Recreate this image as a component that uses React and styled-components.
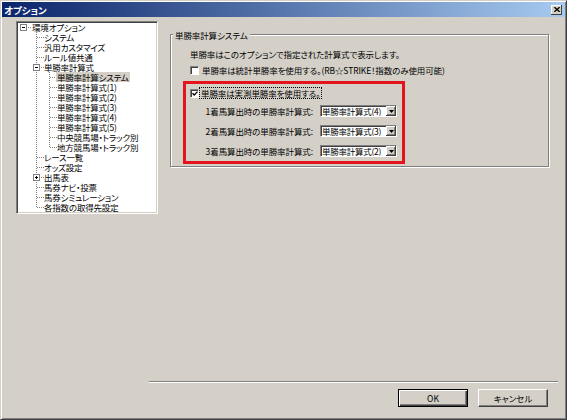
import styled, { createGlobalStyle } from 'styled-components';

const GlobalStyle = createGlobalStyle`
  html, body {
    margin: 0;
    padding: 0;
    background: #d4d0c8;
  }
`;

const FONT = `"Noto Sans CJK JP", "Noto Sans", sans-serif`;
const ROW_H = 10;

const Window = styled.div`
  box-sizing: border-box;
  width: 567px;
  height: 420px;
  display: flex;
  flex-direction: column;
  background: #d4d0c8;
  border: 1px solid #404040;
  border-top-color: #d4d0c8;
  border-left-color: #d4d0c8;
  box-shadow: inset 1px 1px #fff, inset -1px -1px #808080;
  padding: 1px;
  font-family: ${FONT};
  font-size: 8.5px;
  letter-spacing: -0.1px;
  font-feature-settings: "palt";
  color: #000;
`;

const TitleBar = styled.div`
  flex: none;
  height: 15px;
  display: flex;
  align-items: center;
  justify-content: space-between;
  padding: 0 3px 0 2px;
  background: linear-gradient(to right, #0a246a, #a6caf0);
  color: #fff;
  font-weight: bold;
  font-size: 9.5px;
`;

const CloseButton = styled.span`
  box-sizing: border-box;
  width: 11px;
  height: 10px;
  display: flex;
  align-items: center;
  justify-content: center;
  background: #d4d0c8;
  box-shadow: inset -1px -1px #404040, inset 1px 1px #fff;
`;

const Body = styled.div`
  flex: 1;
  display: flex;
  flex-direction: column;
  padding: 4px 0 11px 14px;
`;

const Main = styled.div`
  display: flex;
  align-items: flex-start;
`;

const TreePane = styled.div`
  box-sizing: border-box;
  flex: none;
  width: 142px;
  height: 193px;
  background: #fff;
  border: 1px solid;
  border-color: #808080 #fff #fff #808080;
  box-shadow: inset 1px 1px #404040, inset -1px -1px #d4d0c8;
  padding: 0 1px;
  overflow: hidden;
  letter-spacing: -0.2px;
`;

const TreeRow = styled.div`
  display: flex;
  align-items: center;
  height: ${ROW_H}px;
  white-space: nowrap;
`;

const NodeLabel = styled.span`
  line-height: 10px;
  padding: 0 1px;
  margin-left: ${p => (p.$root ? 0 : -1)}px;
  background: ${p => (p.$selected ? '#d4d0c8' : 'transparent')};
`;

const GroupBox = styled.section`
  box-sizing: border-box;
  width: 379px;
  margin: 13px 0 0 12px;
  display: flex;
  flex-direction: column;
  align-items: flex-start;
  border: 1px solid #808080;
  box-shadow: inset 1px 1px #fff, 1px 1px #fff;
  padding: 0 0 2px 12px;
`;

const GroupTitle = styled.span`
  margin: -5.5px 0 0 -10px;
  padding: 0 2px;
  line-height: 11px;
  background: #d4d0c8;
`;

const Description = styled.div`
  margin: 8px 0 0 7px;
  line-height: 11px;
`;

const CheckRow = styled.label`
  display: flex;
  align-items: center;
  gap: ${p => (p.$focused ? 0 : 3)}px;
  margin: ${p => p.$margin || 0};
  line-height: 11px;
  white-space: nowrap;
`;

const CheckBox = styled.span`
  box-sizing: border-box;
  flex: none;
  width: 9px;
  height: 9px;
  display: flex;
  align-items: center;
  justify-content: center;
  background: #fff;
  border: 1px solid;
  border-color: #808080 #fff #fff #808080;
  box-shadow: inset 1px 1px #404040;
`;

const FocusText = styled.span`
  border: 1px dotted #000;
  padding: 0 1px;
  line-height: 10px;
`;

const Highlight = styled.div`
  box-sizing: border-box;
  width: 222px;
  margin-top: 5.5px;
  display: flex;
  flex-direction: column;
  gap: 8px;
  border: 3px solid #e3141c;
  padding: 3px 5px 4px 4px;
`;

const ComboRow = styled.div`
  display: flex;
  align-items: center;
  justify-content: flex-end;
  gap: 7px;
  height: 12px;
  margin-top: ${p => (p.$first ? -2 : 0)}px;
  white-space: nowrap;
`;

const Combo = styled.div`
  box-sizing: border-box;
  flex: none;
  width: 77px;
  height: 12px;
  display: flex;
  align-items: center;
  background: #fff;
  border: 1px solid;
  border-color: #808080 #fff #fff #808080;
  box-shadow: inset 1px 1px #404040;
`;

const ComboValue = styled.span`
  flex: 1;
  padding-left: 1px;
  line-height: 10px;
  letter-spacing: -0.25px;
  overflow: hidden;
`;

const ComboButton = styled.span`
  box-sizing: border-box;
  flex: none;
  width: 10px;
  height: 10px;
  display: flex;
  align-items: center;
  justify-content: center;
  background: #d4d0c8;
  box-shadow: inset -1px -1px #404040, inset 1px 1px #fff, inset -2px -2px #808080;
`;

const Spacer = styled.div`
  flex: 1;
`;

const Separator = styled.div`
  height: 0;
  margin: 0 7px 0 133px;
  border-top: 1px solid #808080;
  border-bottom: 1px solid #fff;
`;

const ButtonRow = styled.div`
  display: flex;
  justify-content: flex-end;
  gap: 10px;
  margin-top: 6px;
  padding-right: 17px;
`;

const DialogButton = styled.button`
  box-sizing: border-box;
  width: 70px;
  height: 18px;
  padding: 0;
  font-family: ${FONT};
  font-size: 8.5px;
  font-feature-settings: "palt";
  color: #000;
  background: #d4d0c8;
  border: 1px solid;
  border-color: ${p => (p.$default ? '#000' : '#fff #404040 #404040 #fff')};
  box-shadow: ${p =>
    p.$default
      ? 'inset 1px 1px #fff, inset -1px -1px #404040, inset -2px -2px #808080'
      : 'inset -1px -1px #808080'};
`;

const tree = {
  label: '環境オプション',
  open: true,
  children: [
    { label: 'システム' },
    { label: '汎用カスタマイズ' },
    { label: 'ルール値共通' },
    {
      label: '単勝率計算式',
      open: true,
      children: [
        { label: '単勝率計算システム', selected: true },
        { label: '単勝率計算式(1)' },
        { label: '単勝率計算式(2)' },
        { label: '単勝率計算式(3)' },
        { label: '単勝率計算式(4)' },
        { label: '単勝率計算式(5)' },
        { label: '中央競馬場・トラック別' },
        { label: '地方競馬場・トラック別' },
      ],
    },
    { label: 'レース一覧' },
    { label: 'オッズ設定' },
    { label: '出馬表', open: false, children: [{ label: '出馬表' }] },
    { label: '馬券ナビ・投票' },
    { label: '馬券シミュレーション' },
    { label: '各指数の取得先設定' },
  ],
};

const flatten = (node, depth, guides, isLast, isRoot, out) => {
  out.push({ node, depth, guides, isLast, isRoot });
  if (node.children && node.open) {
    node.children.forEach((child, i) =>
      flatten(child, depth + 1, [...guides, !isLast], i === node.children.length - 1, false, out)
    );
  }
  return out;
};

const rows = flatten(tree, 0, [], true, true, []);

const MID = 5.5;

const PassGuide = ({ show }) => (
  <svg width="13" height={ROW_H} style={{ flex: 'none' }}>
    {show && (
      <line x1="5.5" y1="0" x2="5.5" y2={ROW_H} stroke="#808080" strokeDasharray="1 1" />
    )}
  </svg>
);

const Connector = ({ isRoot, isLast, hasChildren, open }) => (
  <svg width="13" height={ROW_H} style={{ flex: 'none' }}>
    {!isRoot && (
      <line x1="5.5" y1="0" x2="5.5" y2={isLast ? MID : ROW_H} stroke="#808080" strokeDasharray="1 1" />
    )}
    <line x1="6" y1={MID} x2="13" y2={MID} stroke="#808080" strokeDasharray="1 1" />
    {hasChildren && (
      <g shapeRendering="crispEdges">
        <rect x="2.5" y="2.5" width="6" height="6" fill="#fff" stroke="#808080" />
        <line x1="4" y1={MID} x2="7" y2={MID} stroke="#000" />
        {!open && <line x1="5.5" y1="4" x2="5.5" y2="7" stroke="#000" />}
      </g>
    )}
  </svg>
);

const Check = () => (
  <svg width="6" height="5" viewBox="0 0 6 5">
    <path d="M0.5 2.2 L2.2 4 L5.5 0.6" fill="none" stroke="#000" strokeWidth="1.3" />
  </svg>
);

const Arrow = () => (
  <svg width="5" height="3" viewBox="0 0 5 3">
    <path d="M0 0 H5 L2.5 3 Z" fill="#000" />
  </svg>
);

const formulas = [
  { label: '1着馬算出時の単勝率計算式:', value: '単勝率計算式(4)' },
  { label: '2着馬算出時の単勝率計算式:', value: '単勝率計算式(3)' },
  { label: '3着馬算出時の単勝率計算式:', value: '単勝率計算式(2)' },
];

export default function App() {
  return (
    <>
      <GlobalStyle />
      <Window>
        <TitleBar>
          <span>オプション</span>
          <CloseButton>
            <svg width="6" height="5" viewBox="0 0 6 5">
              <path d="M0.3 0.2 L5.7 4.8 M5.7 0.2 L0.3 4.8" stroke="#000" strokeWidth="1.4" />
            </svg>
          </CloseButton>
        </TitleBar>
        <Body>
          <Main>
            <TreePane>
              {rows.map(({ node, depth, guides, isLast, isRoot }, i) => (
                <TreeRow key={i}>
                  {guides.map((g, k) => (
                    <PassGuide key={k} show={g} />
                  ))}
                  <Connector
                    isRoot={isRoot}
                    isLast={isLast}
                    hasChildren={!!node.children}
                    open={node.open}
                  />
                  <NodeLabel $root={depth === 0} $selected={node.selected}>
                    {node.label}
                  </NodeLabel>
                </TreeRow>
              ))}
            </TreePane>
            <GroupBox>
              <GroupTitle>単勝率計算システム</GroupTitle>
              <Description>単勝率はこのオプションで指定された計算式で表示します。</Description>
              <CheckRow $margin="5px 0 0 7px">
                <CheckBox />
                単勝率は統計単勝率を使用する。(RB☆STRIKE！指数のみ使用可能)
              </CheckRow>
              <Highlight>
                <CheckRow $focused $margin="0 0 0 0">
                  <CheckBox>
                    <Check />
                  </CheckBox>
                  <FocusText>単勝率は実測単勝率を使用する。</FocusText>
                </CheckRow>
                {formulas.map((f, i) => (
                  <ComboRow key={f.label} $first={i === 0}>
                    <span>{f.label}</span>
                    <Combo>
                      <ComboValue>{f.value}</ComboValue>
                      <ComboButton>
                        <Arrow />
                      </ComboButton>
                    </Combo>
                  </ComboRow>
                ))}
              </Highlight>
            </GroupBox>
          </Main>
          <Spacer />
          <Separator />
          <ButtonRow>
            <DialogButton $default>OK</DialogButton>
            <DialogButton>キャンセル</DialogButton>
          </ButtonRow>
        </Body>
      </Window>
    </>
  );
}
